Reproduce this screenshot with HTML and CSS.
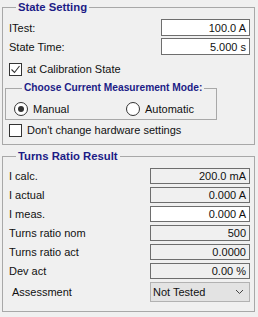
FILE: index.html
```html
<!DOCTYPE html>
<html>
<head>
<meta charset="utf-8">
<link rel="stylesheet" href="styles.css">
</head>
<body>
<div class="panel">
  <fieldset class="group g1">
    <legend>State Setting</legend>
    <div class="rows top-rows">
      <div class="row"><span class="lbl">ITest:</span><span class="box white narrow">100.0 A</span></div>
      <div class="row"><span class="lbl">State Time:</span><span class="box white narrow">5.000 s</span></div>
    </div>
    <div class="check first-check">
      <span class="cb"><svg width="13" height="13" viewBox="0 0 13 13"><polyline points="2.5,6.5 5.5,9.5 10.5,3" fill="none" stroke="#333" stroke-width="1.1"/></svg></span>
      <span>at Calibration State</span>
    </div>
    <fieldset class="group inner">
      <legend>Choose Current Measurement Mode:</legend>
      <div class="radios">
        <div class="radio-item manual"><span class="radio on"></span><span>Manual</span></div>
        <div class="radio-item"><span class="radio"></span><span>Automatic</span></div>
      </div>
    </fieldset>
    <div class="check second-check">
      <span class="cb"></span>
      <span>Don't change hardware settings</span>
    </div>
  </fieldset>

  <fieldset class="group g2">
    <legend>Turns Ratio Result</legend>
    <div class="rows result-rows">
      <div class="row"><span class="lbl">I calc.</span><span class="box ro wide">200.0 mA</span></div>
      <div class="row"><span class="lbl">I actual</span><span class="box ro wide">0.000 A</span></div>
      <div class="row"><span class="lbl">I meas.</span><span class="box white wide">0.000 A</span></div>
      <div class="row"><span class="lbl">Turns ratio nom</span><span class="box ro wide">500</span></div>
      <div class="row"><span class="lbl">Turns ratio act</span><span class="box ro wide">0.0000</span></div>
      <div class="row"><span class="lbl">Dev act</span><span class="box ro wide">0.00 %</span></div>
      <div class="row"><span class="lbl indent">Assessment</span>
        <span class="combo"><span>Not Tested</span><svg width="9" height="6" viewBox="0 0 9 6"><polyline points="1,1 4.5,4.5 8,1" fill="none" stroke="#444" stroke-width="1"/></svg></span>
      </div>
    </div>
  </fieldset>
</div>
</body>
</html>
```

FILE: styles.css
```css
html, body {
  margin: 0;
  padding: 0;
  background: #f0f0f0;
}
body {
  width: 258px;
  height: 317px;
  overflow: hidden;
  font-family: "Liberation Sans", Arial, sans-serif;
  font-size: 11px;
  color: #111;
}
.panel {
  display: flex;
  flex-direction: column;
  padding: 0 3px 0 2px;
}
.group {
  margin: 0;
  border: 1px solid #a8a8a8;
  padding: 0 4px 0 6px;
  min-width: 0;
}
.group legend {
  margin-left: 7px;
  padding: 0 2px;
  font-weight: bold;
  color: #1c1c86;
  line-height: 13px;
  font-size: 11.3px;
}
.g1 {
  margin-top: 1px;
  padding-top: 5px;
  padding-bottom: 7px;
}
.g2 {
  margin-top: 5px;
  padding-top: 5px;
  padding-bottom: 9px;
}
.rows {
  display: flex;
  flex-direction: column;
}
.top-rows { gap: 2px; }
.result-rows { gap: 3px; }
.row {
  display: flex;
  justify-content: space-between;
  align-items: center;
}
.lbl { padding-left: 0; }
.lbl.indent { padding-left: 3px; }
.box {
  box-sizing: border-box;
  border: 1px solid #6e6e6e;
  text-align: right;
  padding-right: 3px;
  display: flex;
  align-items: center;
  justify-content: flex-end;
}
.box.narrow { width: 89px; height: 17px; }
.box.wide { width: 100px; height: 16px; }
.box.white { background: #fff; }
.box.ro { background: #f0f0f0; }
.combo {
  box-sizing: border-box;
  width: 100px;
  height: 20px;
  background: #e3e3e3;
  border: 1px solid #b2b2b2;
  display: flex;
  align-items: center;
  justify-content: space-between;
  padding: 0 5px 0 2px;
}
.check {
  display: flex;
  align-items: center;
  gap: 5px;
  height: 13px;
  line-height: 13px;
}
.first-check { margin-top: 8px; }
.second-check { margin-top: 4px; }
.cb {
  box-sizing: border-box;
  width: 13px;
  height: 13px;
  border: 1px solid #333;
  background: #fff;
  display: block;
  position: relative;
}
.cb svg {
  position: absolute;
  left: -1px;
  top: -1px;
}
.inner {
  margin: 6px 33px 0 -4px;
  padding: 8px 4px 4px 8px;
}
.inner legend {
  font-size: 10.2px;
  line-height: 12px;
  margin-left: 8px;
  padding: 0 2px;
}
.radios {
  display: flex;
}
.radio-item {
  display: flex;
  align-items: center;
  gap: 5px;
  height: 13px;
}
.radio-item.manual { width: 112px; }
.radio {
  box-sizing: border-box;
  width: 14px;
  height: 14px;
  border: 1px solid #333;
  border-radius: 50%;
  background: #fff;
  display: flex;
  align-items: center;
  justify-content: center;
}
.radio.on::after {
  content: "";
  width: 6px;
  height: 6px;
  border-radius: 50%;
  background: #333;
}
```
